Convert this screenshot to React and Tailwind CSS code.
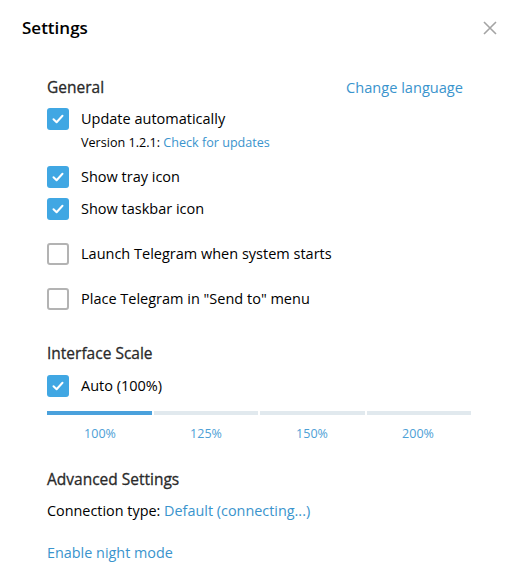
import React from "react";

const font = { fontFamily: '"Open Sans", "Noto Sans", sans-serif' };

function Check({ checked }) {
  if (checked) {
    return (
      <div className="w-[22px] h-[22px] rounded-[3px] bg-[#40a7e3] flex items-center justify-center shrink-0">
        <svg width="12" height="10" viewBox="0 0 12 10" fill="none">
          <path d="M1.5 5.2 L4.6 8.2 L10.5 1.8" stroke="white" strokeWidth="2" strokeLinecap="round" strokeLinejoin="round" />
        </svg>
      </div>
    );
  }
  return <div className="w-[22px] h-[22px] rounded-[3px] border-2 border-[#b3b3b3] shrink-0" />;
}

function Row({ checked, label, className }) {
  return (
    <div className={"flex items-center h-[22px] " + className}>
      <Check checked={checked} />
      <span className="ml-[12px] text-[14.5px] text-[#000] leading-none">{label}</span>
    </div>
  );
}

export default function App() {
  return (
    <div className="w-[517px] h-[577px] bg-white relative" style={font}>
      <div className="h-[56px] flex items-center pl-[22px]">
        <span className="text-[17px] font-semibold text-[#000]">Settings</span>
      </div>
      <div className="absolute left-[483px] top-[21px]">
        <svg width="14" height="14" viewBox="0 0 14 14">
          <path d="M1 1 L13 13 M13 1 L1 13" stroke="#a4a4a4" strokeWidth="1.6" />
        </svg>
      </div>
      <div className="pl-[47px] pr-[46px]">
        <div className="mt-[20px] h-[24px] flex items-center justify-between">
          <span className="text-[15.5px] text-[#2a2a2a] [-webkit-text-stroke:0.3px_#2a2a2a]">General</span>
          <span className="text-[14.6px] text-[#3a94cd] mr-[8px]">Change language</span>
        </div>
        <Row checked label="Update automatically" className="mt-[8px]" />
        <div className="mt-[5px] h-[16px] flex items-center pl-[34px] text-[12.6px]">
          <span className="text-[#000]">Version 1.2.1:&nbsp;</span>
          <span className="text-[#3a94cd]">Check for updates</span>
        </div>
        <Row checked label="Show tray icon" className="mt-[15px]" />
        <Row checked label="Show taskbar icon" className="mt-[10px]" />
        <Row checked={false} label="Launch Telegram when system starts" className="mt-[23px]" />
        <Row checked={false} label={'Place Telegram in "Send to" menu'} className="mt-[23px]" />

        <div className="mt-[32px] h-[24px] flex items-center">
          <span className="text-[15.5px] text-[#2a2a2a] [-webkit-text-stroke:0.3px_#2a2a2a]">Interface Scale</span>
        </div>
        <Row checked label="Auto (100%)" className="mt-[9px]" />
        <div className="mt-[14px] grid grid-cols-4 gap-[2px] h-[4px]">
          <div className="bg-[#4aa1dc]" />
          <div className="bg-[#e1e9ee]" />
          <div className="bg-[#e1e9ee]" />
          <div className="bg-[#e1e9ee]" />
        </div>
        <div className="mt-[10px] grid grid-cols-4 h-[16px] text-[12.5px] text-[#4da0d6]">
          <div className="flex items-center justify-center">100%</div>
          <div className="flex items-center justify-center">125%</div>
          <div className="flex items-center justify-center">150%</div>
          <div className="flex items-center justify-center">200%</div>
        </div>

        <div className="mt-[27px] h-[24px] flex items-center">
          <span className="text-[15.5px] text-[#2a2a2a] [-webkit-text-stroke:0.3px_#2a2a2a]">Advanced Settings</span>
        </div>
        <div className="mt-[9px] h-[20px] flex items-center text-[14.4px]">
          <span className="text-[#000]">Connection type:&nbsp;</span>
          <span className="text-[#3a94cd]">Default (connecting...)</span>
        </div>
        <div className="mt-[22px] h-[20px] flex items-center text-[14.4px]">
          <span className="text-[#3a94cd]">Enable night mode</span>
        </div>
      </div>
    </div>
  );
}
